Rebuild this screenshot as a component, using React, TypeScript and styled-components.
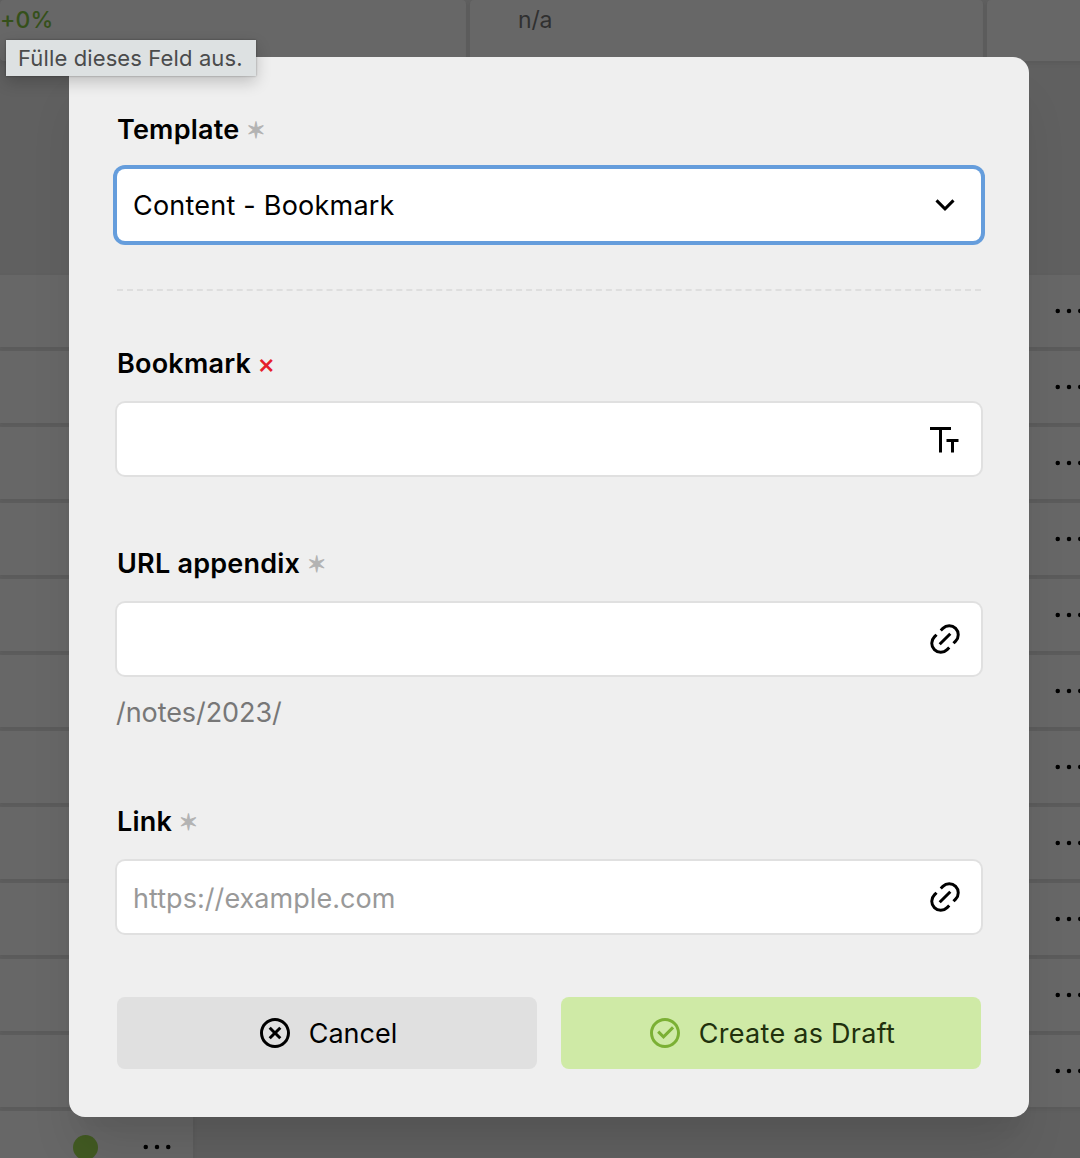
import React from "react";
import styled, { createGlobalStyle, css } from "styled-components";

const GlobalStyle = createGlobalStyle`
  *, *::before, *::after { box-sizing: border-box; }
  html, body { margin: 0; height: 100%; overflow: hidden; background: #606060; }
  body { font-family: Inter, "Liberation Sans", sans-serif; font-size: 27px; color: #000; }
  button, input { font: inherit; color: inherit; border: 0; margin: 0; }
`;

const cardShadow = css`
  background: #676767;
  box-shadow: 0 2px 6px rgba(0, 0, 0, 0.05), 0 2px 4px rgba(0, 0, 0, 0.025);
`;

const Screen = styled.div`
  position: relative;
  width: 1080px;
  height: 1158px;
  overflow: hidden;
`;

const Page = styled.div`
  display: flex;
  flex-direction: column;
  gap: 214px;
`;

const Stats = styled.div`
  display: grid;
  grid-template-columns: 466px 513px 513px;
  gap: 4px;
  height: 61px;
`;

const Stat = styled.div<{ $positive?: boolean }>`
  ${cardShadow}
  padding: 5px 0 0 ${(p) => (p.$positive ? "0" : "48px")};
  border-radius: 4px;
  font-size: 23px;
  font-weight: ${(p) => (p.$positive ? 500 : 400)};
  line-height: 30px;
  letter-spacing: ${(p) => (p.$positive ? "0.2px" : "-0.2px")};
  color: ${(p) => (p.$positive ? "#35501a" : "#303030")};
`;

const Items = styled.div`
  display: flex;
  flex-direction: column;
  gap: 4px;
`;

const Item = styled.div<{ $short?: boolean }>`
  ${cardShadow}
  display: flex;
  align-items: center;
  justify-content: flex-end;
  gap: 41.5px;
  height: 72px;
  width: ${(p) => (p.$short ? "193px" : "1105px")};
  padding-right: 18px;
`;

const Status = styled.span`
  width: 25px;
  height: 25px;
  border-radius: 50%;
  background: #425a22;
`;

const Overlay = styled.div`
  position: absolute;
  inset: 0;
  display: flex;
  align-items: flex-start;
  padding: 57px 51px 0 69px;
`;

const Dialog = styled.form`
  width: 960px;
  height: 1060px;
  padding: 48px;
  border-radius: 16px;
  background: #efefef;
  box-shadow: 0 40px 50px -10px rgba(0, 0, 0, 0.1), 0 20px 20px -10px rgba(0, 0, 0, 0.04);
`;

const Fields = styled.div`
  display: flex;
  flex-direction: column;
  gap: 64px;
`;

const Divider = styled.hr`
  margin: 48px 0;
  border: 0;
  border-top: 2px dashed #dedede;
`;

const FieldBox = styled.div`
  display: flex;
  flex-direction: column;
  gap: 16px;
`;

const Label = styled.label`
  display: flex;
  align-items: center;
  height: 48px;
  font-weight: 600;
  letter-spacing: 0.22px;
`;

const Required = styled.span`
  margin: 2px 0 0 7px;
  font: 400 22.5px/26px "DejaVu Sans", sans-serif;
  color: #b3b3b3;
  -webkit-text-stroke: 0.9px #b3b3b3;
`;

const Invalid = styled.span`
  margin: 2px 0 0 6px;
  font-size: 27px;
  line-height: 28px;
  font-weight: 500;
  color: #e5202a;
`;

const Control = styled.div<{ $focus?: boolean }>`
  display: flex;
  align-items: center;
  justify-content: space-between;
  height: 72px;
  padding: 0 18px 0 16px;
  border-radius: 8px;
  background: #fff;
  box-shadow: 0 0 0 ${(p) => (p.$focus ? "4px #659ddc" : "2px #e0e0e0")};
`;

const Value = styled.span`
  letter-spacing: 0.22px;
`;

const Input = styled.input`
  flex: 1;
  min-width: 0;
  padding: 2px 0 0;
  outline: 0;
  background: none;
  letter-spacing: 0.05px;
  &::placeholder { color: #999; opacity: 1; }
`;

const Help = styled.div`
  padding-top: 1px;
  margin-left: -1px;
  line-height: 41px;
  letter-spacing: -0.07px;
  color: #777;
`;

const Buttons = styled.div`
  display: grid;
  grid-template-columns: 1fr 1fr;
  gap: 24px;
  margin-top: 64px;
`;

const Button = styled.button<{ $positive?: boolean }>`
  display: flex;
  align-items: center;
  justify-content: center;
  gap: 16px;
  height: 72px;
  padding: 0;
  border-radius: 8px;
  letter-spacing: ${(p) => (p.$positive ? "0.27px" : "0")};
  background: ${(p) => (p.$positive ? "#cfeaa6" : "#e0e0e0")};
  color: ${(p) => (p.$positive ? "#21310d" : "#000")};
  svg { color: ${(p) => (p.$positive ? "#7bb034" : "#000")}; }
`;

const Tooltip = styled.div`
  position: absolute;
  left: 6px;
  top: 40px;
  width: 250px;
  height: 36px;
  padding-left: 12px;
  background: #dde1e2;
  box-shadow: 0 0 2px rgba(0, 0, 0, 0.35), 0 6px 16px rgba(0, 0, 0, 0.2);
  color: #4a4b4c;
  font-size: 22px;
  line-height: 37px;
  letter-spacing: 0.12px;
  white-space: nowrap;
`;

const IconSvg = styled.svg`
  flex: none;
  width: 36px;
  height: 36px;
  fill: currentColor;
`;

const ring =
  "M12 22C6.477 22 2 17.523 2 12S6.477 2 12 2s10 4.477 10 10-4.477 10-10 10zm0-2a8 8 0 1 0 0-16 8 8 0 0 0 0 16z";

const icons = {
  angle: "M12 13.172l4.95-4.95 1.414 1.414L12 16 5.636 9.636 7.05 8.222z",
  title: "M10 6v15H8V6H2V4h14v2h-6zm8 8v7h-2v-7h-3v-2h8v2h-3z",
  url: "M18.364 15.536L16.95 14.12l1.414-1.414a5 5 0 1 0-7.071-7.071L9.879 7.05 8.464 5.636 9.88 4.222a7 7 0 0 1 9.9 9.9l-1.415 1.414zm-2.828 2.828l-1.415 1.414a7 7 0 0 1-9.9-9.9l1.415-1.414L7.05 9.88l-1.414 1.414a5 5 0 1 0 7.071 7.071l1.414-1.414 1.415 1.414zm-.708-10.607l1.415 1.415-7.071 7.07-1.415-1.414 7.071-7.07z",
  cancel:
    ring +
    "M12 10.586l2.828-2.829 1.415 1.415L13.414 12l2.829 2.828-1.415 1.415L12 13.414l-2.828 2.829-1.415-1.415L10.586 12 7.757 9.172l1.415-1.415z",
  check: ring + "M11.003 16L6.76 11.757l1.414-1.414 2.829 2.829 5.656-5.657 1.415 1.414z",
  dots: "M4.5 10.5a1.5 1.5 0 1 0 0 3 1.5 1.5 0 0 0 0-3zm7.5 0a1.5 1.5 0 1 0 0 3 1.5 1.5 0 0 0 0-3zm7.5 0a1.5 1.5 0 1 0 0 3 1.5 1.5 0 0 0 0-3z",
};

function Icon({ name }: { name: keyof typeof icons }) {
  return (
    <IconSvg viewBox="0 0 24 24" aria-hidden="true">
      <path d={icons[name]} />
    </IconSvg>
  );
}

interface FieldProps {
  label: string;
  icon: keyof typeof icons;
  value?: string;
  placeholder?: string;
  help?: string;
  invalid?: boolean;
  focus?: boolean;
}

function Field({ label, icon, value, placeholder, help, invalid, focus }: FieldProps) {
  return (
    <FieldBox>
      <Label>
        {label}
        {invalid ? <Invalid>×</Invalid> : <Required>✶</Required>}
      </Label>
      <Control $focus={focus}>
        {value ? <Value>{value}</Value> : <Input placeholder={placeholder} aria-label={label} />}
        <Icon name={icon} />
      </Control>
      {help && <Help>{help}</Help>}
    </FieldBox>
  );
}

const rows = Array.from({ length: 11 }, (_, i) => i);

export default function App() {
  return (
    <Screen>
      <GlobalStyle />
      <Page>
        <Stats>
          <Stat $positive>+0%</Stat>
          <Stat>n/a</Stat>
          <Stat />
        </Stats>
        <Items>
          {rows.map((row) => (
            <Item key={row}>
              <Icon name="dots" />
            </Item>
          ))}
          <Item $short>
            <Status />
            <Icon name="dots" />
          </Item>
        </Items>
      </Page>
      <Overlay>
        <Dialog>
          <Field label="Template" icon="angle" value="Content - Bookmark" focus />
          <Divider />
          <Fields>
            <Field label="Bookmark" icon="title" invalid />
            <Field label="URL appendix" icon="url" help="/notes/2023/" />
            <Field label="Link" icon="url" placeholder="https://example.com" />
          </Fields>
          <Buttons>
            <Button type="button">
              <Icon name="cancel" />
              Cancel
            </Button>
            <Button type="button" $positive>
              <Icon name="check" />
              Create as Draft
            </Button>
          </Buttons>
        </Dialog>
      </Overlay>
      <Tooltip>Fülle dieses Feld aus.</Tooltip>
    </Screen>
  );
}
